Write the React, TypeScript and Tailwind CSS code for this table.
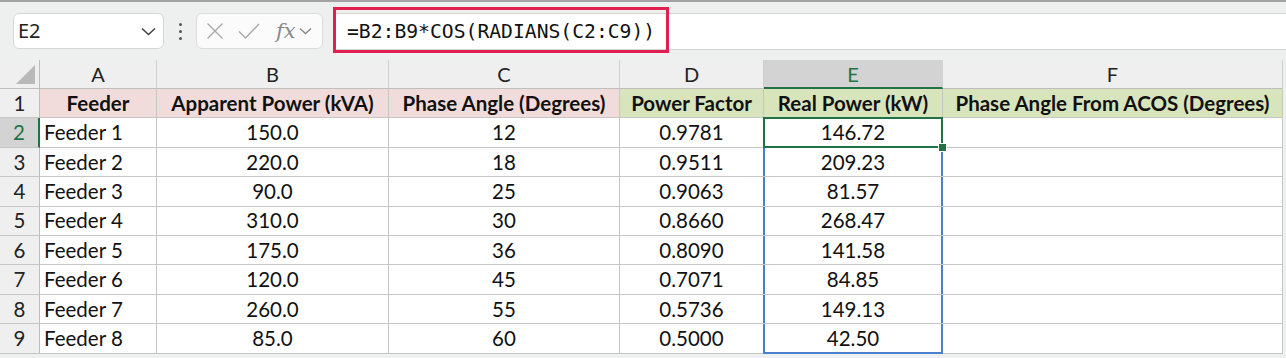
import type { ReactNode } from 'react'

const colWidths = [40, 117, 232, 231, 144, 179, 340]
const letters = ['A', 'B', 'C', 'D', 'E', 'F']

const headers = [
  { text: 'Feeder', bg: 'bg-[#f2dcdb]' },
  { text: 'Apparent Power (kVA)', bg: 'bg-[#f2dcdb]' },
  { text: 'Phase Angle (Degrees)', bg: 'bg-[#f2dcdb]' },
  { text: 'Power Factor', bg: 'bg-[#d8e4bc]' },
  { text: 'Real Power (kW)', bg: 'bg-[#d8e4bc]' },
  { text: 'Phase Angle From ACOS (Degrees)', bg: 'bg-[#d8e4bc]' },
]

const dados = [
  ['Feeder 1', '150.0', '12', '0.9781', '146.72'],
  ['Feeder 2', '220.0', '18', '0.9511', '209.23'],
  ['Feeder 3', '90.0', '25', '0.9063', '81.57'],
  ['Feeder 4', '310.0', '30', '0.8660', '268.47'],
  ['Feeder 5', '175.0', '36', '0.8090', '141.58'],
  ['Feeder 6', '120.0', '45', '0.7071', '84.85'],
  ['Feeder 7', '260.0', '55', '0.5736', '149.13'],
  ['Feeder 8', '85.0', '60', '0.5000', '42.50'],
]

function Cell({ children, className = '' }: { children?: ReactNode; className?: string }) {
  return (
    <div
      className={`relative flex h-[29.4px] items-center whitespace-nowrap border-b border-r border-[#c6c6c6] text-[20.5px] text-[#111] ${className}`}
    >
      {children}
    </div>
  )
}

function Toolbar() {
  return (
    <div className="flex h-[58px] items-start pt-[11px]">
      {/* Caixa de nome */}
      <div className="ml-[13px] flex h-[36px] w-[151px] items-center justify-between rounded-[6px] border border-[#d6d6d6] bg-white pl-[4px] pr-[7px]">
        <span className="font-['Noto_Sans',sans-serif] text-[20px] text-[#222]">E2</span>
        <svg width="15" height="9" viewBox="0 0 15 9" fill="none">
          <path d="M1 1.5L7.5 7.5L14 1.5" stroke="#444" strokeWidth="1.6" />
        </svg>
      </div>

      {/* Reticências */}
      <div className="flex h-[36px] w-[32px] flex-col items-center justify-center gap-[4px]">
        <span className="h-[3px] w-[3px] rounded-full bg-[#555]" />
        <span className="h-[3px] w-[3px] rounded-full bg-[#555]" />
        <span className="h-[3px] w-[3px] rounded-full bg-[#555]" />
      </div>

      {/* Botões de função */}
      <div className="flex h-[36px] w-[127px] items-center rounded-[6px] border border-[#dcdcdc] bg-[#fbfbfb] pl-[9px]">
        <svg width="18" height="18" viewBox="0 0 18 18" fill="none">
          <path d="M1.5 1.5L16.5 16.5M16.5 1.5L1.5 16.5" stroke="#a8a8a8" strokeWidth="1.4" />
        </svg>
        <svg className="ml-[14px]" width="22" height="18" viewBox="0 0 22 18" fill="none">
          <path d="M1 9.5L7.5 16L21 2" stroke="#a8a8a8" strokeWidth="1.4" />
        </svg>
        <span className="ml-[16px] font-['DejaVu_Serif',serif] text-[21px] italic leading-none text-[#8a8a8a]">
          fx
        </span>
        <svg className="ml-[3px]" width="13" height="8" viewBox="0 0 13 8" fill="none">
          <path d="M1 1.5L6.5 6.5L12 1.5" stroke="#8a8a8a" strokeWidth="1.4" />
        </svg>
      </div>

      {/* Barra de fórmulas */}
      <div className="relative ml-[10px] flex h-[37px] flex-1 items-center border-y border-[#d4d4d4] bg-white">
        <div className="absolute left-0 top-[-7px] h-[46px] w-[336px] border-[3px] border-[#e0214f]" />
        <span className="pl-[14px] font-['DejaVu_Sans_Mono',monospace] text-[19.7px] text-[#111]">
          =B2:B9*COS(RADIANS(C2:C9))
        </span>
      </div>
    </div>
  )
}

export default function App() {
  return (
    <div className="h-[358px] w-[1286px] overflow-hidden bg-[#eef0ef] font-['Lato',sans-serif]">
      <div className="h-[2px] bg-[#a3a3a3]" />
      <Toolbar />

      <div
        className="grid bg-white"
        style={{ gridTemplateColumns: colWidths.map((w) => `${w}px`).join(' '), width: 1283 }}
      >
        {/* Canto */}
        <div className="relative h-[29px] border-b border-r border-[#bdbdbd] bg-[#efefef]">
          <svg className="absolute bottom-[4px] right-[4px]" width="19" height="19" viewBox="0 0 19 19">
            <path d="M19 0V19H0Z" fill="#b9b9b9" />
          </svg>
        </div>

        {letters.map((l) =>
          l === 'E' ? (
            <div
              key={l}
              className="flex h-[29px] items-center justify-center border-b-2 border-r border-b-[#217346] border-r-[#d0d0d0] bg-[#d3d3d3] text-[20px] text-[#217346]"
            >
              {l}
            </div>
          ) : (
            <div
              key={l}
              className="flex h-[29px] items-center justify-center border-b border-r border-b-[#bdbdbd] border-r-[#d0d0d0] bg-[#efefef] text-[20px] text-[#222]"
            >
              {l}
            </div>
          )
        )}

        {/* Linha 1 */}
        <Cell className="justify-center border-r-[#bdbdbd] bg-[#efefef] text-[#222]">1</Cell>
        {headers.map((h) => (
          <Cell key={h.text} className={`justify-center font-bold ${h.bg}`}>
            {h.text}
          </Cell>
        ))}

        {dados.map((linha, i) => {
          const numero = i + 2
          const selecionada = numero === 2
          const ultima = i === dados.length - 1
          return [
            <Cell
              key={`h${numero}`}
              className={
                selecionada
                  ? 'justify-center border-r-2 border-r-[#217346] bg-[#d3d3d3] text-[#217346]'
                  : 'justify-center border-r-[#bdbdbd] bg-[#efefef] text-[#222]'
              }
            >
              {numero}
            </Cell>,
            <Cell key={`a${numero}`} className="pl-[4px]">
              {linha[0]}
            </Cell>,
            <Cell key={`b${numero}`} className="justify-center">
              {linha[1]}
            </Cell>,
            <Cell key={`c${numero}`} className="justify-center">
              {linha[2]}
            </Cell>,
            <Cell key={`d${numero}`} className="justify-center">
              {linha[3]}
            </Cell>,
            <Cell key={`e${numero}`} className={`justify-center ${selecionada ? 'z-10' : ''}`}>
              {linha[4]}
              {selecionada ? (
                <>
                  <div className="absolute inset-[-1px] border-2 border-[#217346]" />
                  <div className="absolute bottom-[-5px] right-[-5px] h-[9px] w-[9px] border border-white bg-[#217346]" />
                </>
              ) : (
                <div
                  className={`pointer-events-none absolute left-[-1px] right-[-1px] top-0 border-x-2 border-[#4a7fcf] ${
                    ultima ? 'bottom-[-1px] border-b-2' : 'bottom-0'
                  }`}
                />
              )}
            </Cell>,
            <Cell key={`f${numero}`} />,
          ]
        })}
      </div>
    </div>
  )
}
